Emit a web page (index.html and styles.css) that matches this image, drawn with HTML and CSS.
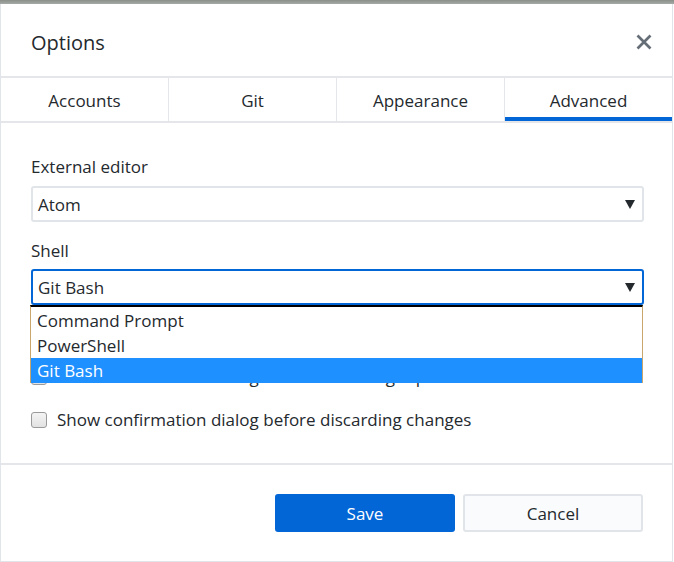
FILE: index.html
```html
<!DOCTYPE html>
<html lang="en">
<head>
<meta charset="utf-8">
<title>Options</title>
<link rel="stylesheet" href="styles.css">
</head>
<body>
<div class="backdrop"></div>
<div class="dialog">
  <header class="dialog-header">
    <h1 class="title">Options</h1>
    <button class="close" aria-label="Close">
      <svg width="16" height="16" viewBox="0 0 16 16"><path d="M1.5 1.5 L14.5 14.5 M14.5 1.5 L1.5 14.5" stroke="#656d76" stroke-width="2.7" fill="none"/></svg>
    </button>
  </header>
  <nav class="tabs">
    <div class="tab">Accounts</div>
    <div class="tab">Git</div>
    <div class="tab">Appearance</div>
    <div class="tab active">Advanced</div>
  </nav>
  <div class="content">
    <div class="field">
      <div class="label">External editor</div>
      <div class="select"><span>Atom</span><span class="arrow"></span></div>
    </div>
    <div class="field shell">
      <div class="label">Shell</div>
      <div class="select focused"><span>Git Bash</span><span class="arrow"></span></div>
      <ul class="dropdown">
        <li>Command Prompt</li>
        <li>PowerShell</li>
        <li class="selected">Git Bash</li>
      </ul>
    </div>
    <div class="checks">
      <div class="check"><span class="box"></span><span>Show confirmation dialog before removing repositories</span></div>
      <div class="check"><span class="box"></span><span>Show confirmation dialog before discarding changes</span></div>
    </div>
  </div>
  <footer class="footer">
    <button class="btn primary">Save</button>
    <button class="btn secondary">Cancel</button>
  </footer>
</div>
</body>
</html>
```
FILE: styles.css
```css
* { box-sizing: border-box; }

html, body {
  margin: 0;
  padding: 0;
}

body {
  width: 674px;
  height: 562px;
  overflow: hidden;
  background: #ffffff;
  color: #24292e;
  font-family: "Open Sans", "Noto Sans", sans-serif;
  font-size: 17px;
}

.backdrop {
  height: 4px;
  background: linear-gradient(#8a8f8a, #a6aaa6);
}

.dialog {
  width: 673px;
  height: 558px;
  border: 1px solid #e1e4e8;
  border-top: none;
  display: flex;
  flex-direction: column;
  background: #fff;
}

.dialog-header {
  height: 74px;
  flex: none;
  display: flex;
  align-items: center;
  justify-content: space-between;
  padding: 4px 20px 0 30px;
  border-bottom: 2px solid #e4e6e9;
}

.title {
  margin: 0;
  font-size: 20px;
  font-weight: 400;
  color: #24292e;
}

.close {
  border: none;
  background: none;
  padding: 0;
  width: 16px;
  height: 16px;
  display: flex;
}

.tabs {
  height: 45px;
  flex: none;
  display: flex;
  border-bottom: 2px solid #e4e6e9;
}

.tab {
  flex: 1;
  display: flex;
  align-items: center;
  justify-content: center;
  padding-top: 2px;
  font-size: 17px;
  color: #24292e;
}

.tab + .tab {
  border-left: 1px solid #e4e6e9;
}

.tab.active {
  box-shadow: inset 0 -4px 0 #0366d6;
}

.content {
  height: 340px;
  flex: none;
  padding: 32px 28px 0 30px;
}

.field {
  position: relative;
}

.label {
  line-height: 23px;
  margin-bottom: 8px;
}

.select {
  height: 36px;
  border: 2px solid #e1e4e8;
  border-radius: 3px;
  display: flex;
  align-items: center;
  justify-content: space-between;
  padding: 0 7px 0 5px;
  margin-bottom: 17px;
}

.arrow {
  width: 0;
  height: 0;
  border-left: 5px solid transparent;
  border-right: 5px solid transparent;
  border-top: 9px solid #24292e;
}

.shell .label {
  margin-bottom: 7px;
}

.select.focused {
  border-color: #0366d6;
  margin-bottom: 0;
}

.dropdown {
  position: absolute;
  top: 66px;
  left: -1px;
  width: 613px;
  margin: 0;
  padding: 1px 0 0;
  list-style: none;
  background: #fff;
  border-top: 2px solid #000;
  border-left: 1px solid #c9a66b;
  border-right: 1px solid #c9a66b;
  z-index: 5;
}

.dropdown li {
  height: 25px;
  line-height: 25px;
  padding-left: 6px;
  color: #24292e;
}

.dropdown li.selected {
  background: #1e90ff;
  color: #fff;
}

.checks {
  margin-top: 60px;
  display: flex;
  flex-direction: column;
  gap: 20px;
}

.check {
  display: flex;
  align-items: center;
  gap: 10px;
  line-height: 23px;
}

.box {
  width: 16px;
  height: 16px;
  flex: none;
  border: 1px solid #9a9a9a;
  border-radius: 3px;
  background: linear-gradient(#f4f4f4, #e2e2e2);
}

.footer {
  flex: none;
  height: 98px;
  border-top: 2px solid #e4e6e9;
  display: flex;
  align-items: center;
  justify-content: flex-end;
  gap: 8px;
  padding: 0 29px 0 0;
}

.btn {
  width: 180px;
  height: 38px;
  border-radius: 3px;
  font-family: "Open Sans", "Noto Sans", sans-serif;
  font-size: 17px;
  padding: 0;
}

.btn.primary {
  background: #0366d6;
  color: #fff;
  border: none;
}

.btn.secondary {
  background: #fafbfc;
  color: #24292e;
  border: 2px solid #e1e4e8;
}
```
